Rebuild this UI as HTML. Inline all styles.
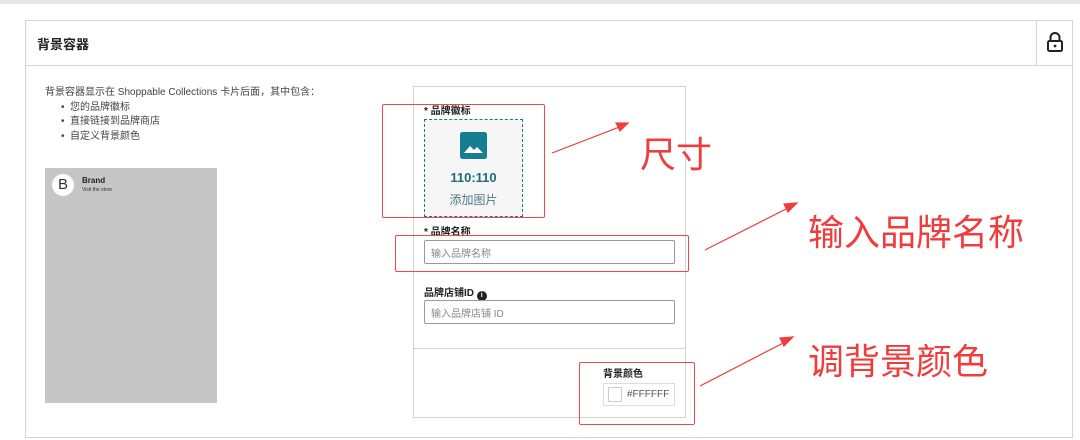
<!DOCTYPE html>
<html><head><meta charset="utf-8"><style>
*{margin:0;padding:0;box-sizing:border-box}
body{width:1080px;height:440px;background:#fff;position:relative;overflow:hidden;font-family:"Liberation Sans","Noto Sans CJK SC",sans-serif;color:#333}
.a{position:absolute}
.red{position:absolute;border:1.5px solid #f04848;border-radius:2px}
.big{position:absolute;color:#f03c3c;font-size:36px;font-family:"Noto Sans CJK SC",sans-serif;line-height:1}
.lbl{position:absolute;font-size:10px;font-weight:bold;color:#222}
.inp{position:absolute;border:1px solid #999;border-radius:2px;font-size:10px;color:#888;padding-left:6px;display:flex;align-items:center}
</style></head><body>
<div class="a" style="left:0;top:0;width:1080px;height:4px;background:#e8e8eb"></div>
<div class="a" style="left:25px;top:20px;width:1048px;height:418px;border:1px solid #d4d4d8"></div>
<div class="a" style="left:25px;top:65px;width:1048px;height:1px;background:#d4d4d8"></div>
<div class="a" style="left:1036px;top:20px;width:1px;height:46px;background:#d4d4d8"></div>
<div class="a" style="left:37px;top:34px;font-size:13px;font-weight:bold;color:#222">背景容器</div>
<svg class="a" style="left:1046px;top:31px" width="18" height="22" viewBox="0 0 18 22"><path d="M4.5 10V6.5a4.5 4.5 0 0 1 9 0V10" fill="none" stroke="#222" stroke-width="2"/><rect x="2" y="10" width="14" height="10" rx="1.5" fill="none" stroke="#222" stroke-width="2"/><circle cx="9" cy="15" r="1.4" fill="#222"/></svg>
<div class="a" style="left:45px;top:86px;font-size:10px;color:#444;line-height:14.5px">背景容器显示在 Shoppable Collections 卡片后面，其中包含：<br>
<span style="padding-left:16px">•&nbsp; 您的品牌徽标</span><br><span style="padding-left:16px">•&nbsp; 直接链接到品牌商店</span><br><span style="padding-left:16px">•&nbsp; 自定义背景颜色</span></div>
<div class="a" style="left:45px;top:168px;width:172px;height:235px;background:#c6c6c6"></div>
<div class="a" style="left:52px;top:174px;width:22px;height:22px;border-radius:50%;background:#fff;font-size:15px;text-align:center;line-height:22px;color:#333">B</div>
<div class="a" style="left:82px;top:176px;font-size:8px;font-weight:bold;color:#222">Brand</div>
<div class="a" style="left:82px;top:187px;font-size:5px;color:#333">Visit the store</div>
<div class="a" style="left:413px;top:86px;width:273px;height:332px;border:1px solid #d4d4d8"></div>
<div class="a" style="left:413px;top:348px;width:273px;height:1px;background:#d4d4d8"></div>
<div class="lbl" style="left:424px;top:102px">* 品牌徽标</div>
<div class="a" style="left:424px;top:119px;width:99px;height:98px;border:1.5px dashed #1a7a8c;background:#f6f6f6"></div>
<svg class="a" style="left:460px;top:132px" width="27" height="27" viewBox="0 0 27 27"><rect width="27" height="27" rx="2.5" fill="#157e90"/><path d="M4 21l6-7 4 4 3-3 6 6z" fill="#fff"/></svg>
<div class="a" style="left:424px;top:170px;width:99px;text-align:center;font-size:13px;font-weight:bold;color:#1a6e7e">110:110</div>
<div class="a" style="left:424px;top:191px;width:99px;text-align:center;font-size:12px;color:#4a7a86">添加图片</div>
<div class="lbl" style="left:424px;top:223px">* 品牌名称</div>
<div class="inp" style="left:424px;top:240px;width:251px;height:24px">输入品牌名称</div>
<div class="lbl" style="left:424px;top:284px">品牌店铺ID <span style="display:inline-block;width:10px;height:10px;border-radius:50%;background:#222;color:#fff;font-size:7px;text-align:center;line-height:10px;vertical-align:-1px">i</span></div>
<div class="inp" style="left:424px;top:300px;width:251px;height:24px">输入品牌店铺 ID</div>
<div class="lbl" style="left:603px;top:365px">背景颜色</div>
<div class="a" style="left:603px;top:383px;width:72px;height:23px;border:1px solid #ddd"></div>
<div class="a" style="left:608px;top:387px;width:14px;height:15px;border:1px solid #ccc"></div>
<div class="a" style="left:627px;top:389px;font-size:10px;color:#555">#FFFFFF</div>
<div class="red" style="left:382px;top:104px;width:163px;height:114px"></div>
<div class="red" style="left:395px;top:235px;width:294px;height:37px"></div>
<div class="red" style="left:579px;top:362px;width:116px;height:63px"></div>
<svg class="a" style="left:0;top:0" width="1080" height="440"><g fill="#f03c3c" stroke="#f03c3c" stroke-width="1.2"><line x1="552" y1="153" x2="622" y2="126"/><path d="M628 123l-12 0 4 8z"/><line x1="705" y1="250" x2="790" y2="207"/><path d="M797 203l-13 1 4 8z"/><line x1="700" y1="386" x2="787" y2="341"/><path d="M793 337l-13 1 4 8z"/></g></svg>
<div class="big" style="left:640px;top:134px">尺寸</div>
<div class="big" style="left:808px;top:212px">输入品牌名称</div>
<div class="big" style="left:808px;top:341px">调背景颜色</div>
</body></html>
